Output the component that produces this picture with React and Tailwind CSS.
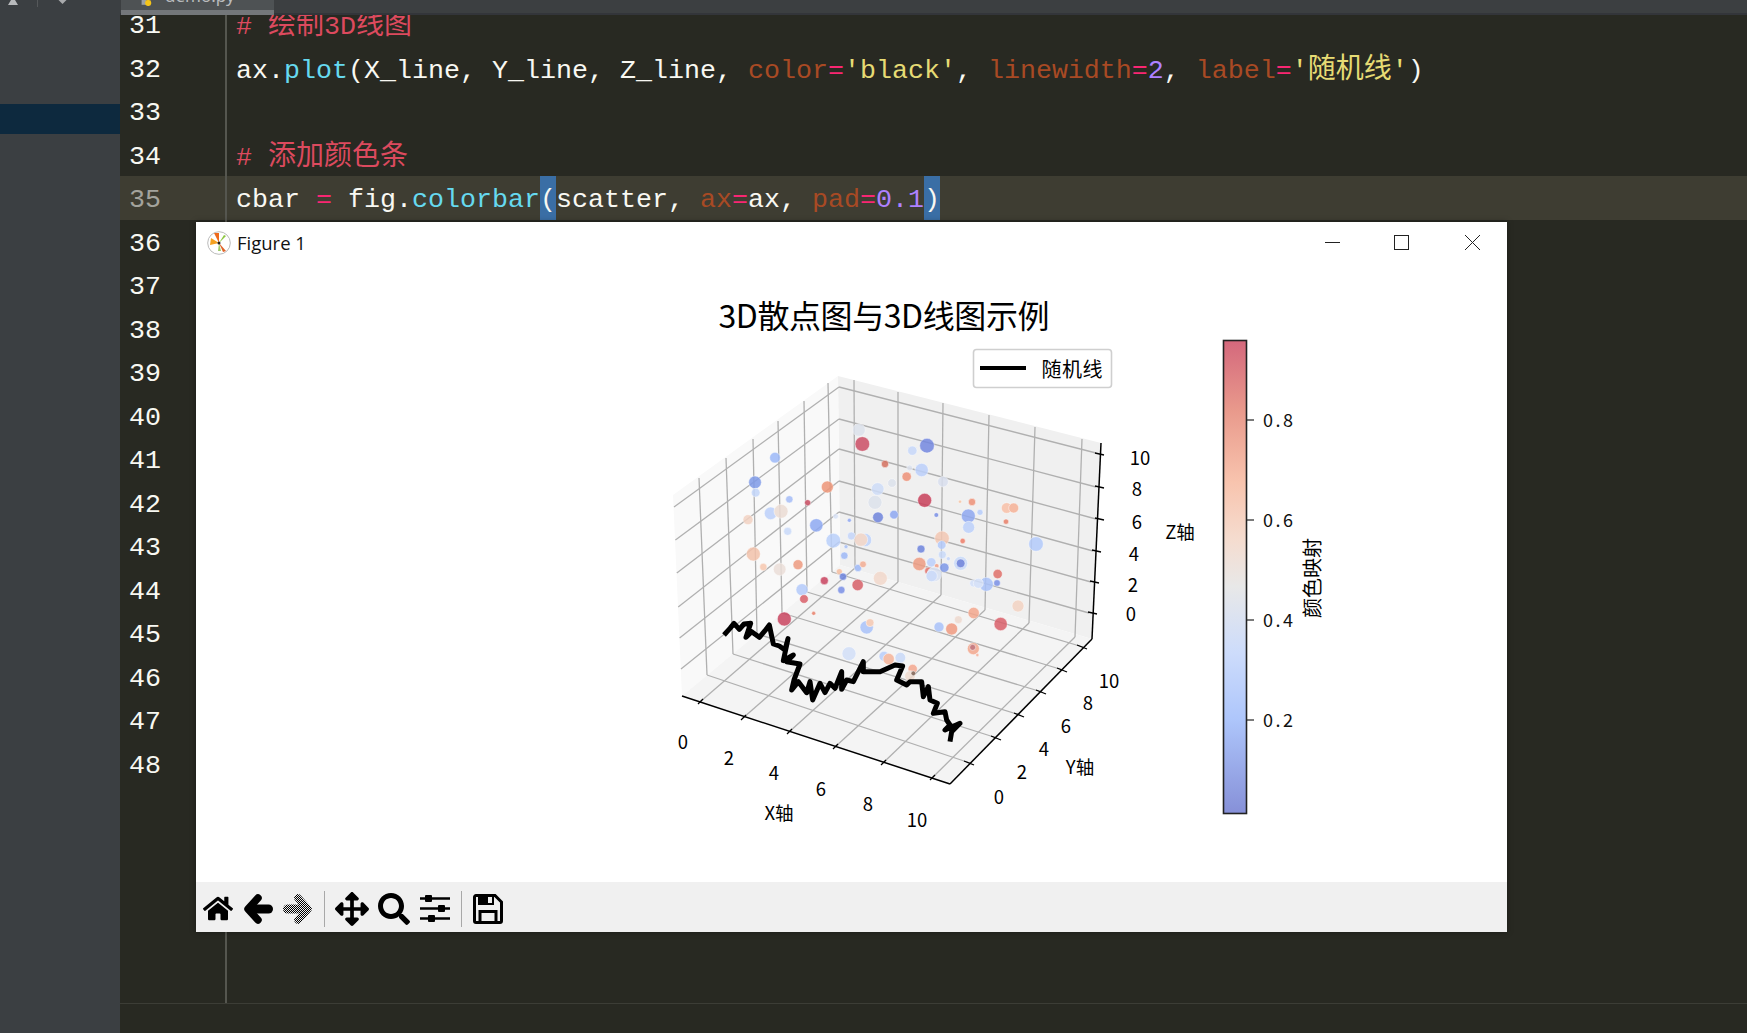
import React from "react";
import { FaHome, FaArrowsAlt, FaSearch } from "react-icons/fa";

const K = ({ children }) => <span className="text-[#a84a24]">{children}</span>;
const Eq = () => <span className="text-[#f92672]">=</span>;
const S = ({ children }) => <span className="text-[#e6db74]">{children}</span>;
const N = ({ children }) => <span className="text-[#ae81ff]">{children}</span>;
const F = ({ children }) => <span className="text-[#66d9ef]">{children}</span>;
const C = ({ children }) => <span className="text-[28px]">{children}</span>;
const B = ({ children }) => <span className="inline-block h-[44px] bg-[#3a6ea5]">{children}</span>;
const Cm = ({ children }) => <span className="text-[#dc4a5e]">{children}</span>;

const lines = {
  31: <Cm># <C>绘制</C>3D<C>线图</C></Cm>,
  32: (
    <>
      ax.<F>plot</F>(X_line, Y_line, Z_line, <K>color</K><Eq /><S>'black'</S>, <K>linewidth</K><Eq /><N>2</N>, <K>label</K><Eq /><S>'<C>随机线</C>'</S>)
    </>
  ),
  34: <Cm># <C>添加颜色条</C></Cm>,
  35: (
    <>
      cbar <span className="text-[#f92672]">=</span> fig.<F>colorbar</F><B>(</B>scatter, <K>ax</K><Eq />ax, <K>pad</K><Eq /><N>0.1</N><B>)</B>
    </>
  ),
};
const nums = Array.from({ length: 18 }, (_, i) => 31 + i);

const top = [
  [627,420,16,"#dde2ec"],[637,462,19,"#cc4f66"],[831,467,19,"#7488e0"],[787,482,11,"#c7d8fa"],[375,503,13,"#9db9f8"],[705,522,8,"#d4705f"],[779,534,6,"#dde2ee"],[815,540,17,"#bcd0fb"],[770,560,11,"#ee9278"],[315,577,16,"#7e9ae8"],[317,608,10,"#c3d6fa"],[726,579,10,"#dde2ec"],[879,575,13,"#d9dfee"],[532,591,15,"#ee9678"],[683,597,16,"#cfddf8"],[418,628,8,"#a5bdf7"],[473,638,6,"#c84b60"],[675,637,18,"#dde2ec"],[824,631,18,"#c9405a"],[966,636,8,"#ee9278"],[930,635,2,"#f7c5a5"],[990,667,6,"#b7cdfb"],[1070,654,13,"#f9c0a8"],[1091,654,12,"#f7b297"],[362,670,16,"#bdd1fb"],[393,664,18,"#ecdcd4"],[294,689,12,"#f3d3c3"],[684,682,13,"#6f84dc"],[732,674,10,"#8ea8f2"],[859,675,4,"#7a90e6"],[955,678,18,"#8fa8f0"],[956,712,15,"#bdd1fb"],[1068,695,5,"#e8806a"],[598,691,3,"#90a8f2"],[557,679,5,"#d8e2f6"],[499,706,17,"#8faaf3"],[413,724,9,"#c9daf9"],[550,752,19,"#bad0fb"],[604,738,9,"#c5d6fa"],[645,750,17,"#bfd3fb"],[633,749,17,"#f0d4c8"],[876,745,19,"#f3c8b4"],[938,753,5,"#ee7d68"],[1158,762,19,"#b4cbfb"],[875,765,10,"#b4cafa"],[813,777,9,"#6e84dd"],[588,770,3,"#a8c0f6"],
];
const low = [
  [310,42,18,"#f3c2ab"],[340,81,8,"#f7c8b0"],[389,88,16,"#ebdfd9"],[444,74,12,"#ee9a80"],[583,47,8,"#9db8f6"],[624,84,8,"#9db8f6"],[639,73,7,"#f3ae94"],[568,95,6,"#f5bda0"],[579,110,8,"#6e84dd"],[523,122,9,"#c9435f"],[623,135,14,"#d75f68"],[574,150,8,"#7a90e6"],[691,115,18,"#f2d8cb"],[456,149,15,"#b4cbfb"],[462,177,10,"#d9606a"],[403,237,18,"#c94560"],[491,220,3,"#e8806a"],[808,72,17,"#ee9c82"],[844,67,11,"#bcd0fb"],[877,44,9,"#c9daf9"],[895,56,3,"#c4d6fa"],[883,83,11,"#7e98e8"],[932,70,18,"#c9daf9"],[932,70,10,"#6a80dc"],[835,93,8,"#e0706a"],[860,78,4,"#f0a088"],[853,103,19,"#d9e1f2"],[845,108,14,"#c7d8fa"],[1043,102,11,"#e0706a"],[1041,129,7,"#7a90e6"],[1009,133,18,"#a9c2f9"],[970,130,8,"#d3e0fa"],[985,130,12,"#d3e0fa"],[1104,198,15,"#f3d3c3"],[971,219,14,"#f3a78d"],[925,239,9,"#eed9cf"],[1052,252,17,"#d9606a"],[867,261,12,"#a9c2f9"],[905,267,15,"#f09a80"],[650,262,17,"#a9c2f9"],[660,248,9,"#f5c8b2"],[970,326,15,"#f3a78d"],[968,322,6,"#c06a70"],[982,345,2,"#f5b09a"],[597,341,18,"#d3e0f8"],[702,349,12,"#b9cefa"],[716,357,14,"#f5b49a"],[751,353,13,"#c9daf8"],[788,387,11,"#f5a890"],[780,408,13,"#f0dcd0"],[790,400,4,"#806050"],
];
const walk = [[222,285],[240,265],[252,250],[268,268],[282,252],[302,250],[288,292],[305,275],[328,292],[345,272],[358,255],[370,312],[388,318],[405,330],[414,296],[400,362],[430,345],[410,365],[450,372],[432,420],[425,450],[445,425],[470,458],[480,425],[488,480],[510,430],[525,458],[540,430],[555,445],[575,395],[575,448],[590,420],[610,425],[640,365],[640,395],[690,395],[735,375],[758,378],[740,420],[770,435],[780,425],[815,425],[820,470],[835,440],[840,480],[862,490],[850,520],[885,515],[890,540],[900,555],[885,570],[930,550],[905,575],[900,605]];
const walkPts = walk.map(([x, y]) => `${650 + x / 3},${540 + y / 3}`).join(" ");

const backTop = [[854,380],[898,392],[943,403],[989,415],[1035,427],[1082,439]];
const backBot = [[855,568],[898,582],[941,595],[985,610],[1029,623],[1075,637]];
const leftTop = [[699,478],[726,458],[753,439],[778,421],[804,401],[828,383]];
const leftBot = [[707,675],[733,654],[757,634],[782,613],[807,592],[832,572]];
const zBack = [[387,453],[419,487],[449,519],[481,551],[512,582],[542,613]];
const zLeft = [507,540,573,607,638,669];
const xTick = [[700,702],[743,718],[789,732],[835,747],[883,763],[932,778]];
const yTick = [[970,763],[997,738],[1020,715],[1042,692],[1063,670],[1083,647]];
const zTick = [[1100,454],[1100,487],[1100,519],[1097,551],[1095,582],[1093,613]];

const labels = [
  ["0",683,742],["2",729,758],["4",774,773],["6",821,789],["8",868,804],["10",917,820],
  ["0",999,797],["2",1022,772],["4",1044,749],["6",1066,726],["8",1088,703],["10",1109,681],
  ["10",1140,458],["8",1137,489],["6",1137,522],["4",1134,554],["2",1133,585],["0",1131,614],
  ["X轴",779,813],["Y轴",1080,767],["Z轴",1180,532],
];

const L = ({ a, b, c = "#b0b0b0", w = 1.3 }) => <line x1={a[0]} y1={a[1]} x2={b[0]} y2={b[1]} stroke={c} strokeWidth={w} />;

function Chart() {
  return (
    <svg viewBox="196 262 1311 620" className="block w-[1311px] h-[620px] bg-white font-['Noto_Sans_CJK_SC','Liberation_Sans',sans-serif]">
      <defs>
        <linearGradient id="cw" x1="0" y1="0" x2="0" y2="1">
          <stop offset="0" stopColor="#d4687c" />
          <stop offset="0.15" stopColor="#e99a8c" />
          <stop offset="0.3" stopColor="#f8c4ae" />
          <stop offset="0.42" stopColor="#f5dccf" />
          <stop offset="0.52" stopColor="#e8e8e8" />
          <stop offset="0.66" stopColor="#cddcfb" />
          <stop offset="0.8" stopColor="#aec6fb" />
          <stop offset="1" stopColor="#8690d8" />
        </linearGradient>
      </defs>
      <text x="884" y="314" textAnchor="middle" dominantBaseline="central" fontSize="32" textLength="331" fill="#000">3D散点图与3D线图示例</text>

      <polygon points="838,376 1101,443 1092,639 840,565" fill="#f0f0f0" />
      <polygon points="838,376 673,495 682,696 840,565" fill="#f9f9f9" />
      <polygon points="840,565 1092,639 950,784 682,696" fill="#f4f4f4" />

      {backTop.map((p, i) => <L key={i} a={p} b={backBot[i]} />)}
      {leftTop.map((p, i) => <L key={i} a={p} b={leftBot[i]} />)}
      {zBack.map(([l, r], i) => <L key={i} a={[839, l]} b={[zTick[i][0] - 4, r]} />)}
      {zBack.map(([l], i) => <L key={i} a={[839, l]} b={[674 + i * 1.4, zLeft[i]]} />)}
      {xTick.map((p, i) => <L key={i} a={p} b={backBot[i]} />)}
      {yTick.map((p, i) => <L key={i} a={p} b={leftBot[i]} />)}

      <L a={[682, 696]} b={[950, 784]} c="#000" w={1.5} />
      <L a={[950, 784]} b={[1092, 639]} c="#000" w={1.5} />
      <L a={[1092, 639]} b={[1101, 443]} c="#000" w={1.5} />
      {xTick.map((p, i) => <L key={i} a={[p[0] - 2, p[1] + 2]} b={[p[0] + 3, p[1] - 3]} c="#000" />)}
      {yTick.map((p, i) => <L key={i} a={[p[0] - 6, p[1] - 2]} b={[p[0] + 4, p[1] + 2]} c="#000" />)}
      {zTick.map((p, i) => <L key={i} a={[p[0] - 5, p[1] - 1]} b={[p[0] + 4, p[1] + 1]} c="#000" />)}

      <g opacity="0.85">
        {top.map(([x, y, r, c], i) => <circle key={i} cx={650 + x / 3} cy={290 + y / 3} r={r / 3 + 1} fill={c} stroke="#fff" strokeOpacity="0.6" strokeWidth="0.8" />)}
        {low.map(([x, y, r, c], i) => <circle key={i} cx={650 + x / 3} cy={540 + y / 3} r={r / 3 + 1} fill={c} stroke="#fff" strokeOpacity="0.6" strokeWidth="0.8" />)}
      </g>
      <polyline points={walkPts} fill="none" stroke="#000" strokeWidth="5" strokeLinejoin="round" />

      {labels.map(([t, x, y], i) => <text key={i} x={x} y={y - 1.5} textAnchor="middle" dominantBaseline="central" fontSize="18.5" fill="#000">{t}</text>)}

      <rect x="973.5" y="349.5" width="138" height="38" rx="3" fill="#fff" stroke="#cfcfcf" strokeWidth="1.6" />
      <line x1="980" y1="368" x2="1026" y2="368" stroke="#000" strokeWidth="3.8" />
      <text x="1072" y="368" textAnchor="middle" dominantBaseline="central" fontSize="20" textLength="61" fill="#000">随机线</text>

      <rect x="1223.5" y="340.5" width="23" height="473" fill="url(#cw)" stroke="#222" strokeWidth="1.6" />
      {[["0.8", 420], ["0.6", 520], ["0.4", 620], ["0.2", 720]].map(([t, y]) => (
        <g key={t}>
          <line x1="1247" y1={y} x2="1254" y2={y} stroke="#222" strokeWidth="1.2" />
          <text x="1263" y={y - 1.5} dominantBaseline="central" fontSize="18" textLength="30" fill="#111">{t}</text>
        </g>
      ))}
      <text x="1311" y="578" transform="rotate(-90 1311 578)" textAnchor="middle" dominantBaseline="central" fontSize="20" fill="#000">颜色映射</text>
    </svg>
  );
}

function FigIcon() {
  return (
    <svg viewBox="0 0 24 24" className="w-[24px] h-[24px] shrink-0">
      <circle cx="12" cy="12" r="11.3" fill="#fff" stroke="#bbb" strokeWidth="1" />
      <polygon points="12,12 4,7 3,14" fill="#f4a020" />
      <polygon points="12,12 7,2 12,2" fill="#ee6a1c" />
      <polygon points="12,12 19,20 16,21" fill="#e0642a" />
      <polygon points="12,12 17,4 19,5" fill="#8cc63f" />
      <polygon points="12,12 11,20 14,20" fill="#9ccc65" />
      <circle cx="12" cy="12" r="1.5" fill="#222" />
    </svg>
  );
}

const Sep = ({ cls }) => <div className={`w-px h-[36px] bg-[#a8a8a8] ${cls}`} />;

const Arrow = ({ paint, cls, flip }) => (
  <svg viewBox="0 0 29 30" className={`w-[29px] h-[30px] ${cls}`}>
    <g transform={flip ? "translate(29 0) scale(-1 1)" : undefined} fill="none" stroke={paint} strokeLinecap="round" strokeLinejoin="round">
      <polyline points="14,4 4,15 14,26" strokeWidth="7.5" />
      <line x1="6" y1="15" x2="24.5" y2="15" strokeWidth="9" />
    </g>
  </svg>
);

function App() {
  return (
    <div className="w-[1747px] h-[1033px] relative overflow-hidden flex bg-[#282922] font-['Liberation_Mono','Noto_Sans_CJK_SC',monospace]">
      <aside className="w-[120px] shrink-0 bg-[#3b3f42] flex flex-col">
        <div className="h-[104px] flex items-start pl-[8px]">
          <svg viewBox="0 0 10 5" className="w-[10px] h-[5px]"><polygon points="0,5 10,5 7,0 3,0" fill="#b8babc" /></svg>
          <div className="w-px h-[7px] bg-[#55585a] ml-[19px]" />
          <svg viewBox="0 0 10 5" className="w-[9px] h-[4px] ml-[20px]"><polygon points="0,0 10,0 5,5" fill="#a8aaac" /></svg>
        </div>
        <div className="h-[30px] bg-[#0d293e]" />
      </aside>

      <main className="flex-1 flex flex-col min-w-0">
        <div className="h-[15px] shrink-0 bg-[#3c3f41] flex border-b-[2px] border-[#33353a]">
          <div className="ml-px w-[153px] h-[15px] bg-[#4e5254] border-b-[5px] border-[#74777a] flex overflow-hidden pl-[17px]">
            <svg viewBox="0 0 18 10" className="w-[18px] h-[6px] shrink-0">
              <rect x="0" y="0" width="8" height="8" fill="#9aa0a6" />
              <rect x="6" y="0" width="10" height="10" rx="4" fill="#f5c518" />
            </svg>
            <span className="ml-[9px] -mt-[14px] text-[17px] leading-[20px] text-[#b9bbbd] font-['Noto_Sans',sans-serif]">demo.py</span>
          </div>
        </div>
        <div className="flex-1 min-h-0 overflow-hidden">
          <div className="-mt-[13px] h-[calc(100%+13px)] flex flex-col text-[26.67px] leading-[49.5px] text-[#f8f8f2]">
            {nums.map((n) => (
              <div key={n} className={`flex h-[43.5px] shrink-0 ${n === 35 ? "bg-[#3e3d32]" : ""}`}>
                <div className={`w-[107px] shrink-0 border-r-2 border-[#55564f] pl-[9px] ${n === 35 ? "text-[#a3a39c]" : "text-[#f8f8f2]"}`}>{n}</div>
                <div className="pl-[9px] whitespace-pre h-[43.5px]">{lines[n] || ""}</div>
              </div>
            ))}
            <div className="flex-1 w-[107px] border-r-2 border-[#55564f]" />
          </div>
        </div>
        <div className="h-[30px] shrink-0 border-t border-[#3c3d36] bg-[#282922]" />
      </main>

      <div className="absolute left-[196px] top-[222px] w-[1311px] h-[710px] flex flex-col bg-white shadow-[0_0_6px_rgba(0,0,0,0.35)]">
        <div className="h-[40px] shrink-0 flex items-center pl-[11px] pt-px">
          <FigIcon />
          <span className="ml-[6px] text-[18.5px] text-[#111] font-['Open_Sans',sans-serif]">Figure 1</span>
          <div className="ml-auto flex items-center">
            <div className="w-[15px] h-px bg-[#222]" />
            <div className="ml-[54px] w-[15px] h-[15px] border border-[#222]" />
            <svg viewBox="0 0 15 15" className="ml-[56px] mr-[27px] w-[15px] h-[15px]">
              <path d="M0 0 L15 15 M15 0 L0 15" stroke="#222" strokeWidth="1" />
            </svg>
          </div>
        </div>
        <Chart />
        <div className="h-[50px] shrink-0 bg-[#f0f0f0] flex items-center pl-[7px] pt-[3px] text-black">
          <FaHome className="w-[30px] h-[27px]" />
          <Arrow paint="#000" cls="ml-[11px]" />
          <svg width="0" height="0" className="absolute">
            <defs>
              <pattern id="dither" width="2" height="2" patternUnits="userSpaceOnUse">
                <rect width="2" height="2" fill="#f0f0f0" />
                <rect width="1" height="1" fill="#000" />
                <rect x="1" y="1" width="1" height="1" fill="#000" />
              </pattern>
            </defs>
          </svg>
          <Arrow paint="url(#dither)" cls="ml-[10px]" flip />
          <Sep cls="ml-[12px]" />
          <FaArrowsAlt className="ml-[10px] w-[34px] h-[34px]" />
          <FaSearch className="ml-[9px] w-[32px] h-[32px]" />
          <svg viewBox="0 0 30 27" className="ml-[10px] w-[30px] h-[27px]">
            <path d="M0 3.5H30M0 13.5H30M0 23.5H30" stroke="#000" strokeWidth="2.4" />
            <rect x="5" y="0" width="7" height="7" rx="1" fill="#000" />
            <rect x="18" y="10" width="7" height="7" rx="1" fill="#000" />
            <rect x="8" y="20" width="7" height="7" rx="1" fill="#000" />
          </svg>
          <Sep cls="ml-[11px]" />
          <svg viewBox="0 0 30 30" className="ml-[11px] w-[30px] h-[30px]">
            <path d="M3 1.5H22L28.5 8V27A1.5 1.5 0 0 1 27 28.5H3A1.5 1.5 0 0 1 1.5 27V3A1.5 1.5 0 0 1 3 1.5Z" fill="none" stroke="#000" strokeWidth="3" />
            <rect x="5" y="1.5" width="16" height="9.5" fill="#000" />
            <rect x="15" y="3" width="4" height="6" fill="#f0f0f0" />
            <rect x="7" y="17.5" width="16" height="11" fill="none" stroke="#000" strokeWidth="3" />
          </svg>
        </div>
      </div>
    </div>
  );
}

export default App;
